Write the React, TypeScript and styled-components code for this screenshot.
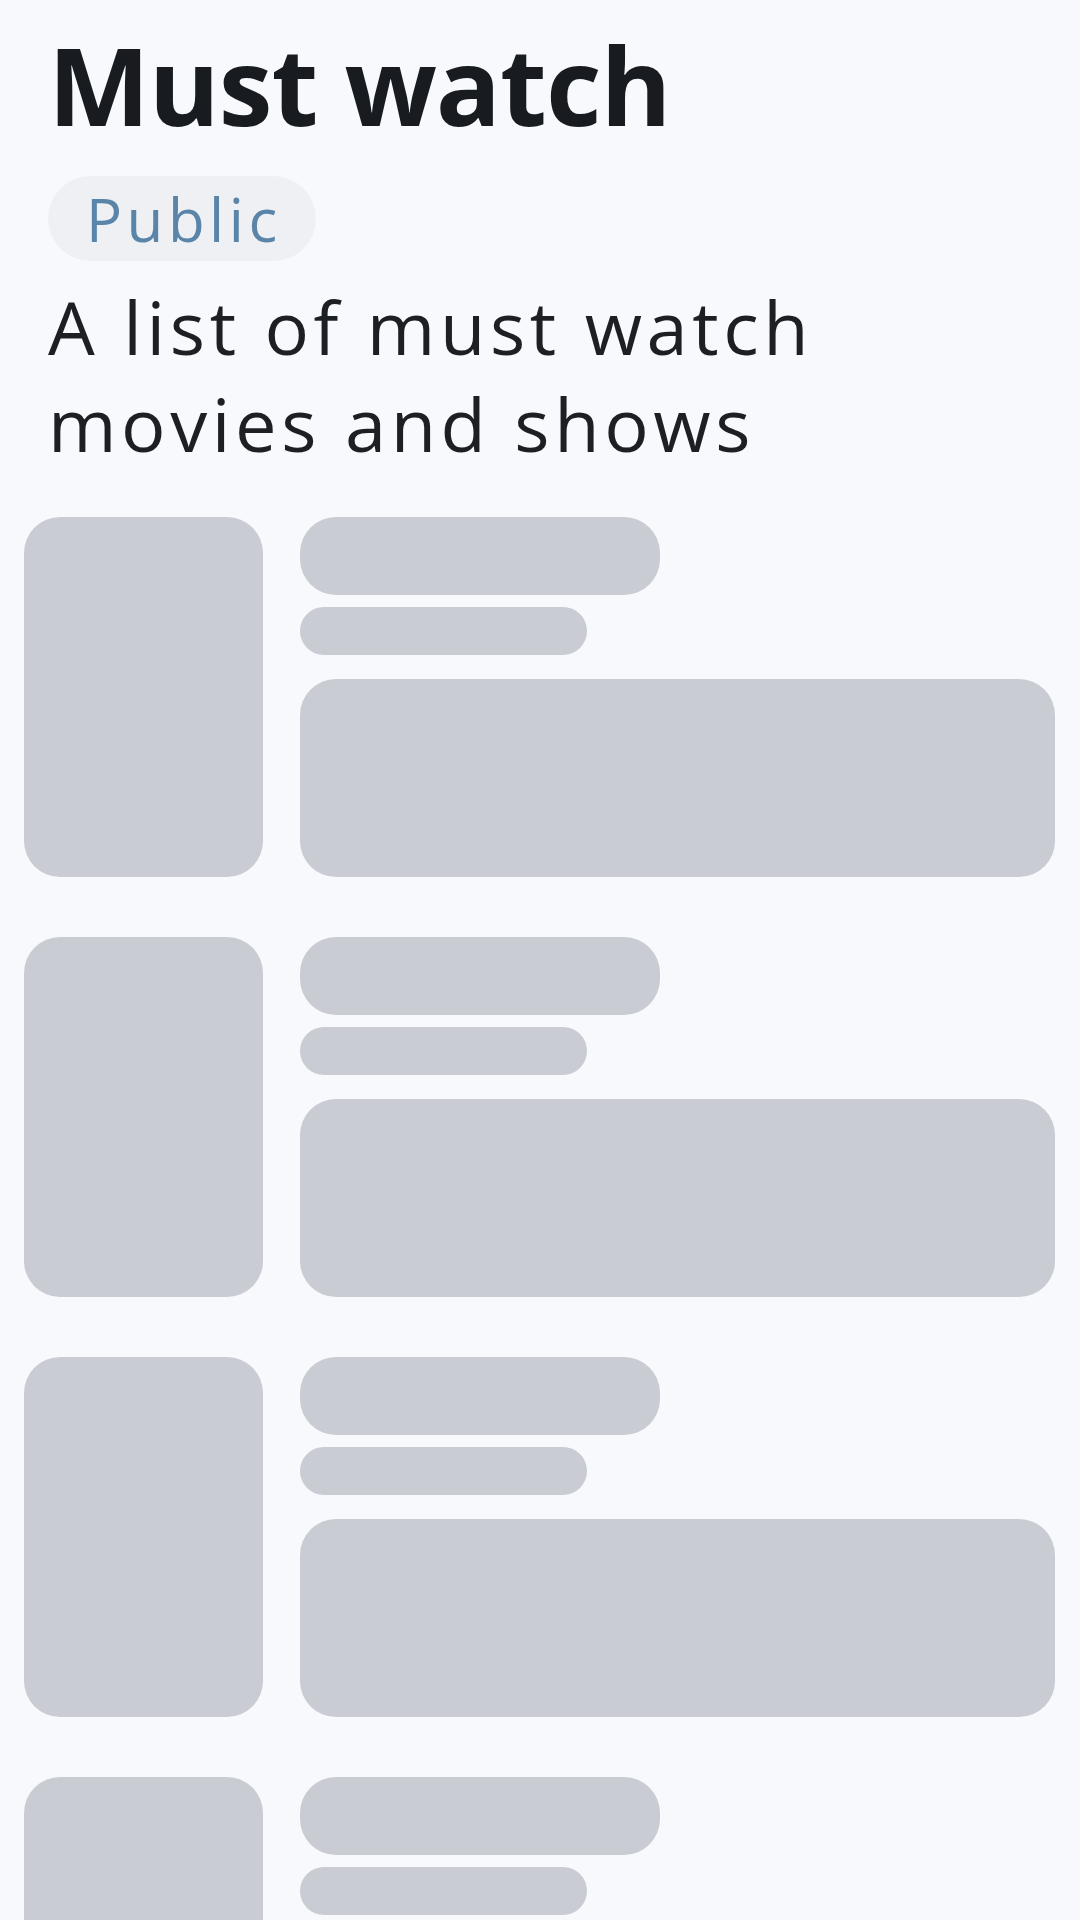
import React from "react";
import styled, { createGlobalStyle } from "styled-components";

const GlobalStyle = createGlobalStyle`
	html, body {
		margin: 0;
		padding: 0;
		background: #f8f9fd;
	}
	body {
		font-family: "Open Sans", "Noto Sans", sans-serif;
		color: #1a1d22;
	}
`;

const Page = styled.div`
	width: 1080px;
	height: 1920px;
	overflow: hidden;
	box-sizing: border-box;
	padding-top: 20px;
	background: #f8f9fd;
`;

const Header = styled.header`
	padding: 0 48px;
	display: flex;
	flex-direction: column;
	align-items: flex-start;
`;

const Title = styled.h1`
	margin: 0;
	font-size: 108px;
	line-height: 130px;
	font-weight: 700;
	letter-spacing: -1px;
	color: #181b20;
`;

const Badge = styled.span`
	margin-top: 26px;
	height: 85px;
	box-sizing: border-box;
	display: inline-flex;
	align-items: center;
	padding: 0 34px 0 38px;
	border-radius: 43px;
	background: #eff0f4;
	color: #5a84a8;
	font-size: 60px;
	letter-spacing: 4.5px;
`;

const Description = styled.p`
	margin: 17px 0 0;
	max-width: 900px;
	font-size: 74px;
	line-height: 97px;
	letter-spacing: 4.6px;
	color: #1c1f24;
`;

const List = styled.div`
	margin-top: 45px;
	padding: 0 25px 0 24px;
	display: flex;
	flex-direction: column;
	gap: 60px;
`;

const Card = styled.div`
	display: flex;
	gap: 37px;
`;

const Bone = styled.div<{ $w?: number; $h: number; $r: number }>`
	width: ${(p) => (p.$w ? `${p.$w}px` : "100%")};
	height: ${(p) => p.$h}px;
	border-radius: ${(p) => p.$r}px;
	background: #c9ccd3;
	flex-shrink: 0;
`;

const Info = styled.div`
	flex: 1;
	display: flex;
	flex-direction: column;
	gap: 12px;
`;

const Body = styled(Bone)`
	margin-top: 12px;
`;

const SkeletonCard = () => (
	<Card>
		<Bone $w={239} $h={360} $r={36} />
		<Info>
			<Bone $w={360} $h={78} $r={36} />
			<Bone $w={287} $h={48} $r={24} />
			<Body $h={198} $r={36} />
		</Info>
	</Card>
);

export default function App() {
	return (
		<Page>
			<GlobalStyle />
			<Header>
				<Title>Must watch</Title>
				<Badge>Public</Badge>
				<Description>A list of must watch movies and shows</Description>
			</Header>
			<List>
				{[0, 1, 2, 3].map((i) => (
					<SkeletonCard key={i} />
				))}
			</List>
		</Page>
	);
}
